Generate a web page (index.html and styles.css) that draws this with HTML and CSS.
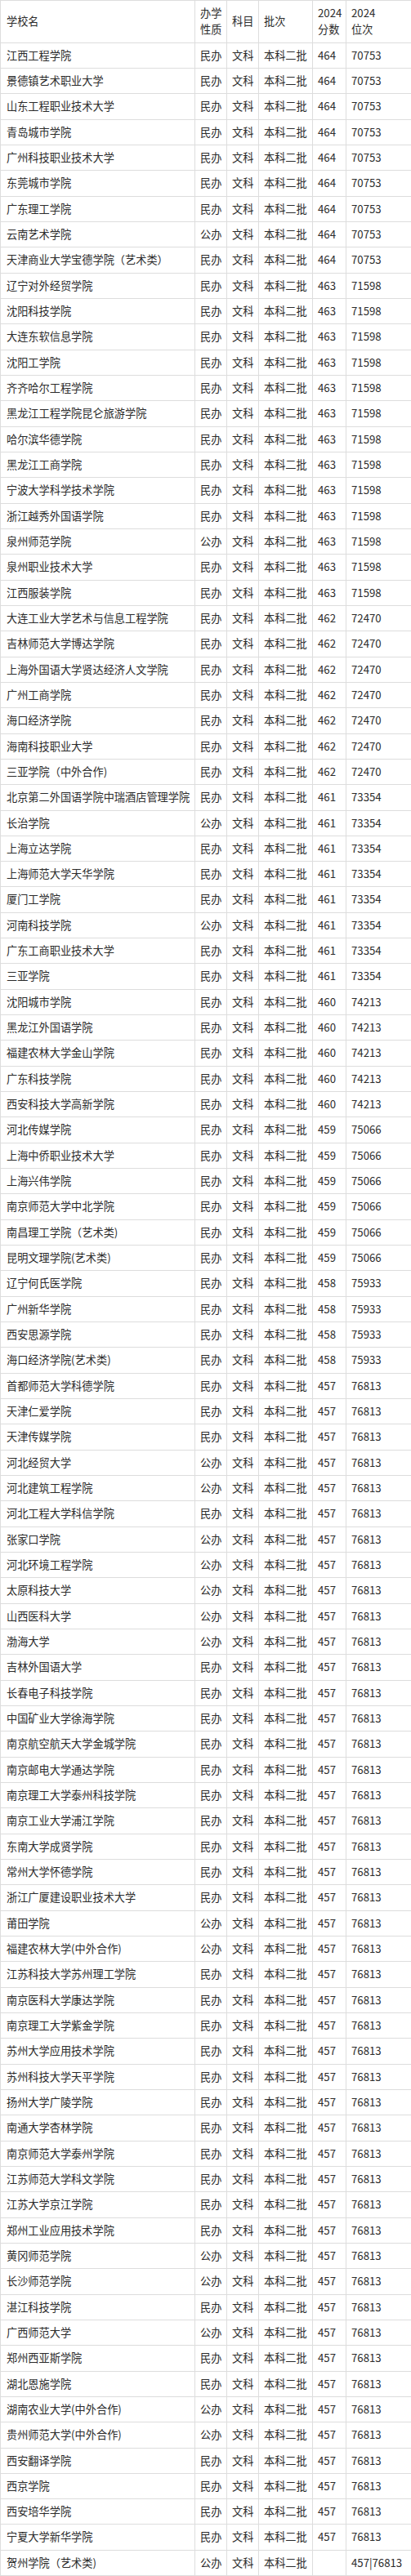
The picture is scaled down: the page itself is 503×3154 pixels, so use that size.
FILE: index.html
```html
<!DOCTYPE html>
<html lang="zh-CN">
<head>
<meta charset="utf-8">
<title>2024 本科二批 文科 院校分数</title>
<link rel="stylesheet" href="styles.css">
</head>
<body>
<table class="score-table">
<colgroup>
<col class="c-name"><col class="c-type"><col class="c-subj"><col class="c-batch"><col class="c-score"><col class="c-rank">
</colgroup>
<thead>
<tr><th>学校名</th><th>办学<br>性质</th><th>科目</th><th>批次</th><th>2024<br>分数</th><th>2024<br>位次</th></tr>
</thead>
<tbody>
<tr><td>江西工程学院</td><td>民办</td><td>文科</td><td>本科二批</td><td>464</td><td>70753</td></tr>
<tr><td>景德镇艺术职业大学</td><td>民办</td><td>文科</td><td>本科二批</td><td>464</td><td>70753</td></tr>
<tr><td>山东工程职业技术大学</td><td>民办</td><td>文科</td><td>本科二批</td><td>464</td><td>70753</td></tr>
<tr><td>青岛城市学院</td><td>民办</td><td>文科</td><td>本科二批</td><td>464</td><td>70753</td></tr>
<tr><td>广州科技职业技术大学</td><td>民办</td><td>文科</td><td>本科二批</td><td>464</td><td>70753</td></tr>
<tr><td>东莞城市学院</td><td>民办</td><td>文科</td><td>本科二批</td><td>464</td><td>70753</td></tr>
<tr><td>广东理工学院</td><td>民办</td><td>文科</td><td>本科二批</td><td>464</td><td>70753</td></tr>
<tr><td>云南艺术学院</td><td>公办</td><td>文科</td><td>本科二批</td><td>464</td><td>70753</td></tr>
<tr><td>天津商业大学宝德学院（艺术类）</td><td>民办</td><td>文科</td><td>本科二批</td><td>464</td><td>70753</td></tr>
<tr><td>辽宁对外经贸学院</td><td>民办</td><td>文科</td><td>本科二批</td><td>463</td><td>71598</td></tr>
<tr><td>沈阳科技学院</td><td>民办</td><td>文科</td><td>本科二批</td><td>463</td><td>71598</td></tr>
<tr><td>大连东软信息学院</td><td>民办</td><td>文科</td><td>本科二批</td><td>463</td><td>71598</td></tr>
<tr><td>沈阳工学院</td><td>民办</td><td>文科</td><td>本科二批</td><td>463</td><td>71598</td></tr>
<tr><td>齐齐哈尔工程学院</td><td>民办</td><td>文科</td><td>本科二批</td><td>463</td><td>71598</td></tr>
<tr><td>黑龙江工程学院昆仑旅游学院</td><td>民办</td><td>文科</td><td>本科二批</td><td>463</td><td>71598</td></tr>
<tr><td>哈尔滨华德学院</td><td>民办</td><td>文科</td><td>本科二批</td><td>463</td><td>71598</td></tr>
<tr><td>黑龙江工商学院</td><td>民办</td><td>文科</td><td>本科二批</td><td>463</td><td>71598</td></tr>
<tr><td>宁波大学科学技术学院</td><td>民办</td><td>文科</td><td>本科二批</td><td>463</td><td>71598</td></tr>
<tr><td>浙江越秀外国语学院</td><td>民办</td><td>文科</td><td>本科二批</td><td>463</td><td>71598</td></tr>
<tr><td>泉州师范学院</td><td>公办</td><td>文科</td><td>本科二批</td><td>463</td><td>71598</td></tr>
<tr><td>泉州职业技术大学</td><td>民办</td><td>文科</td><td>本科二批</td><td>463</td><td>71598</td></tr>
<tr><td>江西服装学院</td><td>民办</td><td>文科</td><td>本科二批</td><td>463</td><td>71598</td></tr>
<tr><td>大连工业大学艺术与信息工程学院</td><td>民办</td><td>文科</td><td>本科二批</td><td>462</td><td>72470</td></tr>
<tr><td>吉林师范大学博达学院</td><td>民办</td><td>文科</td><td>本科二批</td><td>462</td><td>72470</td></tr>
<tr><td>上海外国语大学贤达经济人文学院</td><td>民办</td><td>文科</td><td>本科二批</td><td>462</td><td>72470</td></tr>
<tr><td>广州工商学院</td><td>民办</td><td>文科</td><td>本科二批</td><td>462</td><td>72470</td></tr>
<tr><td>海口经济学院</td><td>民办</td><td>文科</td><td>本科二批</td><td>462</td><td>72470</td></tr>
<tr><td>海南科技职业大学</td><td>民办</td><td>文科</td><td>本科二批</td><td>462</td><td>72470</td></tr>
<tr><td>三亚学院（中外合作)</td><td>民办</td><td>文科</td><td>本科二批</td><td>462</td><td>72470</td></tr>
<tr><td>北京第二外国语学院中瑞酒店管理学院</td><td>民办</td><td>文科</td><td>本科二批</td><td>461</td><td>73354</td></tr>
<tr><td>长治学院</td><td>公办</td><td>文科</td><td>本科二批</td><td>461</td><td>73354</td></tr>
<tr><td>上海立达学院</td><td>民办</td><td>文科</td><td>本科二批</td><td>461</td><td>73354</td></tr>
<tr><td>上海师范大学天华学院</td><td>民办</td><td>文科</td><td>本科二批</td><td>461</td><td>73354</td></tr>
<tr><td>厦门工学院</td><td>民办</td><td>文科</td><td>本科二批</td><td>461</td><td>73354</td></tr>
<tr><td>河南科技学院</td><td>公办</td><td>文科</td><td>本科二批</td><td>461</td><td>73354</td></tr>
<tr><td>广东工商职业技术大学</td><td>民办</td><td>文科</td><td>本科二批</td><td>461</td><td>73354</td></tr>
<tr><td>三亚学院</td><td>民办</td><td>文科</td><td>本科二批</td><td>461</td><td>73354</td></tr>
<tr><td>沈阳城市学院</td><td>民办</td><td>文科</td><td>本科二批</td><td>460</td><td>74213</td></tr>
<tr><td>黑龙江外国语学院</td><td>民办</td><td>文科</td><td>本科二批</td><td>460</td><td>74213</td></tr>
<tr><td>福建农林大学金山学院</td><td>民办</td><td>文科</td><td>本科二批</td><td>460</td><td>74213</td></tr>
<tr><td>广东科技学院</td><td>民办</td><td>文科</td><td>本科二批</td><td>460</td><td>74213</td></tr>
<tr><td>西安科技大学高新学院</td><td>民办</td><td>文科</td><td>本科二批</td><td>460</td><td>74213</td></tr>
<tr><td>河北传媒学院</td><td>民办</td><td>文科</td><td>本科二批</td><td>459</td><td>75066</td></tr>
<tr><td>上海中侨职业技术大学</td><td>民办</td><td>文科</td><td>本科二批</td><td>459</td><td>75066</td></tr>
<tr><td>上海兴伟学院</td><td>民办</td><td>文科</td><td>本科二批</td><td>459</td><td>75066</td></tr>
<tr><td>南京师范大学中北学院</td><td>民办</td><td>文科</td><td>本科二批</td><td>459</td><td>75066</td></tr>
<tr><td>南昌理工学院（艺术类)</td><td>民办</td><td>文科</td><td>本科二批</td><td>459</td><td>75066</td></tr>
<tr><td>昆明文理学院(艺术类)</td><td>民办</td><td>文科</td><td>本科二批</td><td>459</td><td>75066</td></tr>
<tr><td>辽宁何氏医学院</td><td>民办</td><td>文科</td><td>本科二批</td><td>458</td><td>75933</td></tr>
<tr><td>广州新华学院</td><td>民办</td><td>文科</td><td>本科二批</td><td>458</td><td>75933</td></tr>
<tr><td>西安思源学院</td><td>民办</td><td>文科</td><td>本科二批</td><td>458</td><td>75933</td></tr>
<tr><td>海口经济学院(艺术类)</td><td>民办</td><td>文科</td><td>本科二批</td><td>458</td><td>75933</td></tr>
<tr><td>首都师范大学科德学院</td><td>民办</td><td>文科</td><td>本科二批</td><td>457</td><td>76813</td></tr>
<tr><td>天津仁爱学院</td><td>民办</td><td>文科</td><td>本科二批</td><td>457</td><td>76813</td></tr>
<tr><td>天津传媒学院</td><td>民办</td><td>文科</td><td>本科二批</td><td>457</td><td>76813</td></tr>
<tr><td>河北经贸大学</td><td>公办</td><td>文科</td><td>本科二批</td><td>457</td><td>76813</td></tr>
<tr><td>河北建筑工程学院</td><td>公办</td><td>文科</td><td>本科二批</td><td>457</td><td>76813</td></tr>
<tr><td>河北工程大学科信学院</td><td>民办</td><td>文科</td><td>本科二批</td><td>457</td><td>76813</td></tr>
<tr><td>张家口学院</td><td>公办</td><td>文科</td><td>本科二批</td><td>457</td><td>76813</td></tr>
<tr><td>河北环境工程学院</td><td>公办</td><td>文科</td><td>本科二批</td><td>457</td><td>76813</td></tr>
<tr><td>太原科技大学</td><td>公办</td><td>文科</td><td>本科二批</td><td>457</td><td>76813</td></tr>
<tr><td>山西医科大学</td><td>公办</td><td>文科</td><td>本科二批</td><td>457</td><td>76813</td></tr>
<tr><td>渤海大学</td><td>公办</td><td>文科</td><td>本科二批</td><td>457</td><td>76813</td></tr>
<tr><td>吉林外国语大学</td><td>民办</td><td>文科</td><td>本科二批</td><td>457</td><td>76813</td></tr>
<tr><td>长春电子科技学院</td><td>民办</td><td>文科</td><td>本科二批</td><td>457</td><td>76813</td></tr>
<tr><td>中国矿业大学徐海学院</td><td>民办</td><td>文科</td><td>本科二批</td><td>457</td><td>76813</td></tr>
<tr><td>南京航空航天大学金城学院</td><td>民办</td><td>文科</td><td>本科二批</td><td>457</td><td>76813</td></tr>
<tr><td>南京邮电大学通达学院</td><td>民办</td><td>文科</td><td>本科二批</td><td>457</td><td>76813</td></tr>
<tr><td>南京理工大学泰州科技学院</td><td>民办</td><td>文科</td><td>本科二批</td><td>457</td><td>76813</td></tr>
<tr><td>南京工业大学浦江学院</td><td>民办</td><td>文科</td><td>本科二批</td><td>457</td><td>76813</td></tr>
<tr><td>东南大学成贤学院</td><td>民办</td><td>文科</td><td>本科二批</td><td>457</td><td>76813</td></tr>
<tr><td>常州大学怀德学院</td><td>民办</td><td>文科</td><td>本科二批</td><td>457</td><td>76813</td></tr>
<tr><td>浙江广厦建设职业技术大学</td><td>民办</td><td>文科</td><td>本科二批</td><td>457</td><td>76813</td></tr>
<tr><td>莆田学院</td><td>公办</td><td>文科</td><td>本科二批</td><td>457</td><td>76813</td></tr>
<tr><td>福建农林大学(中外合作)</td><td>公办</td><td>文科</td><td>本科二批</td><td>457</td><td>76813</td></tr>
<tr><td>江苏科技大学苏州理工学院</td><td>民办</td><td>文科</td><td>本科二批</td><td>457</td><td>76813</td></tr>
<tr><td>南京医科大学康达学院</td><td>民办</td><td>文科</td><td>本科二批</td><td>457</td><td>76813</td></tr>
<tr><td>南京理工大学紫金学院</td><td>民办</td><td>文科</td><td>本科二批</td><td>457</td><td>76813</td></tr>
<tr><td>苏州大学应用技术学院</td><td>民办</td><td>文科</td><td>本科二批</td><td>457</td><td>76813</td></tr>
<tr><td>苏州科技大学天平学院</td><td>民办</td><td>文科</td><td>本科二批</td><td>457</td><td>76813</td></tr>
<tr><td>扬州大学广陵学院</td><td>民办</td><td>文科</td><td>本科二批</td><td>457</td><td>76813</td></tr>
<tr><td>南通大学杏林学院</td><td>民办</td><td>文科</td><td>本科二批</td><td>457</td><td>76813</td></tr>
<tr><td>南京师范大学泰州学院</td><td>民办</td><td>文科</td><td>本科二批</td><td>457</td><td>76813</td></tr>
<tr><td>江苏师范大学科文学院</td><td>民办</td><td>文科</td><td>本科二批</td><td>457</td><td>76813</td></tr>
<tr><td>江苏大学京江学院</td><td>民办</td><td>文科</td><td>本科二批</td><td>457</td><td>76813</td></tr>
<tr><td>郑州工业应用技术学院</td><td>民办</td><td>文科</td><td>本科二批</td><td>457</td><td>76813</td></tr>
<tr><td>黄冈师范学院</td><td>公办</td><td>文科</td><td>本科二批</td><td>457</td><td>76813</td></tr>
<tr><td>长沙师范学院</td><td>公办</td><td>文科</td><td>本科二批</td><td>457</td><td>76813</td></tr>
<tr><td>湛江科技学院</td><td>民办</td><td>文科</td><td>本科二批</td><td>457</td><td>76813</td></tr>
<tr><td>广西师范大学</td><td>公办</td><td>文科</td><td>本科二批</td><td>457</td><td>76813</td></tr>
<tr><td>郑州西亚斯学院</td><td>民办</td><td>文科</td><td>本科二批</td><td>457</td><td>76813</td></tr>
<tr><td>湖北恩施学院</td><td>民办</td><td>文科</td><td>本科二批</td><td>457</td><td>76813</td></tr>
<tr><td>湖南农业大学(中外合作)</td><td>公办</td><td>文科</td><td>本科二批</td><td>457</td><td>76813</td></tr>
<tr><td>贵州师范大学(中外合作)</td><td>公办</td><td>文科</td><td>本科二批</td><td>457</td><td>76813</td></tr>
<tr><td>西安翻译学院</td><td>民办</td><td>文科</td><td>本科二批</td><td>457</td><td>76813</td></tr>
<tr><td>西京学院</td><td>民办</td><td>文科</td><td>本科二批</td><td>457</td><td>76813</td></tr>
<tr><td>西安培华学院</td><td>民办</td><td>文科</td><td>本科二批</td><td>457</td><td>76813</td></tr>
<tr><td>宁夏大学新华学院</td><td>民办</td><td>文科</td><td>本科二批</td><td>457</td><td>76813</td></tr>
<tr><td>贺州学院（艺术类)</td><td>公办</td><td>文科</td><td>本科二批</td><td></td><td>457|76813</td></tr>
</tbody>
</table>
</body>
</html>
```
FILE: styles.css
```css
html, body {
  margin: 0;
  padding: 0;
  background: #ffffff;
}

body {
  font-family: "Noto Sans CJK SC", sans-serif;
  font-size: 13.2px;
  color: #2b2b2b;
}

.score-table {
  width: 503px;
  table-layout: fixed;
  border-collapse: collapse;
}

.c-name { width: 238px; }
.c-type { width: 39px; }
.c-subj { width: 39px; }
.c-batch { width: 66px; }
.c-score { width: 41px; }
.c-rank { width: 80px; }

.score-table th,
.score-table td {
  border: 1px solid #dddddd;
  padding: 5px 3px 5px 6px;
  height: 20.33px;
  line-height: 20.33px;
  text-align: left;
  vertical-align: middle;
  font-weight: normal;
  white-space: nowrap;
  overflow: visible;
}

.score-table th:first-child,
.score-table td:first-child {
  padding-left: 7px;
}

.score-table th:last-child,
.score-table td:last-child {
  border-right: none;
}
```
